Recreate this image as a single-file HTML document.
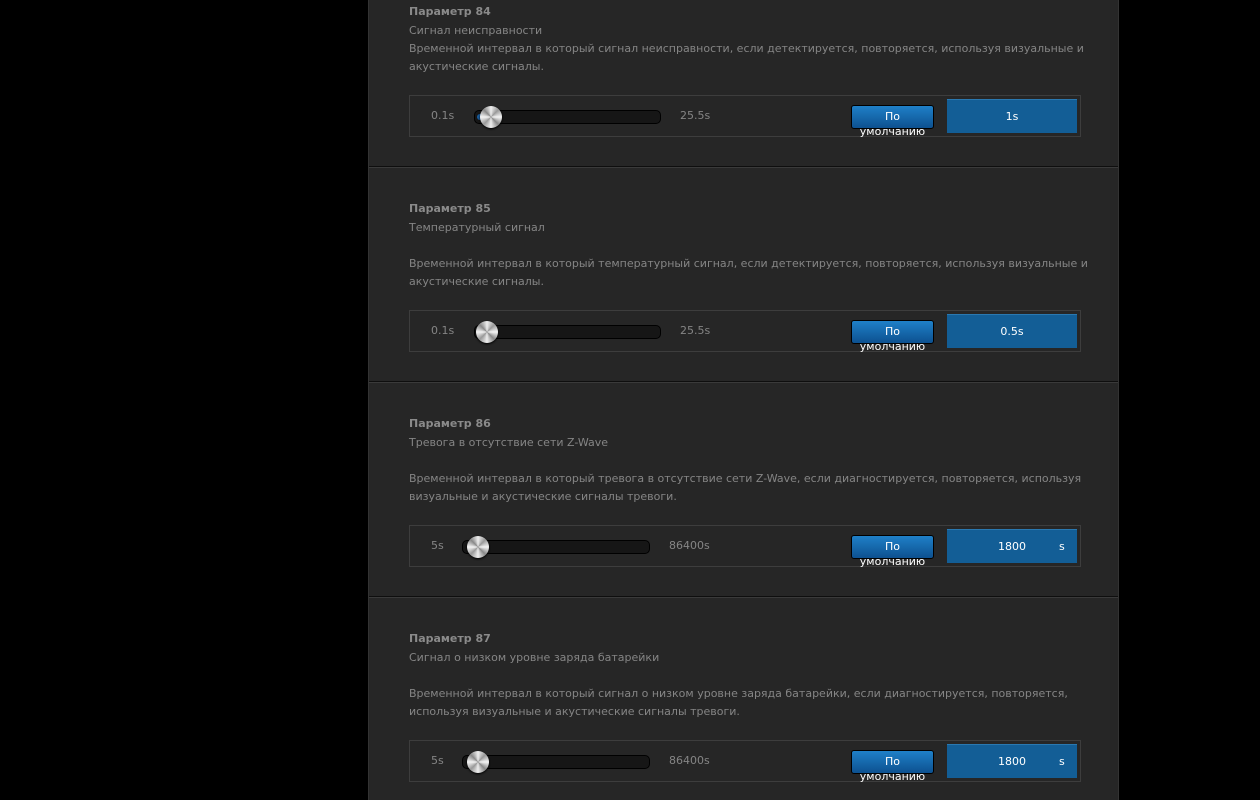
<!DOCTYPE html>
<html><head><meta charset="utf-8"><style>
*{margin:0;padding:0;box-sizing:border-box}
body{width:1260px;height:800px;background:#000;position:relative;overflow:hidden;font-family:"DejaVu Sans","Liberation Sans",sans-serif;font-size:11px;color:#858585}
.panel{position:absolute;left:368px;top:0;width:751px;height:800px;background:#262626;border-left:1px solid #333;border-right:1px solid #333}
.sep{position:absolute;left:0;width:100%;height:2px;border-top:1px solid #0e0e0e;border-bottom:1px solid #3a3a3a}
.t{position:absolute;left:40px;white-space:nowrap;line-height:18px}
.b{font-weight:bold;color:#8a8a8a}
.box{position:absolute;left:40px;width:672px;height:42px;border:1px solid #3d3d3d;background:#262626}
.lab{position:absolute;top:13px;color:#858585}
.track{position:absolute;top:14px;height:14px;border:1px solid #000;border-radius:5px;background:#161616}
.knob{position:absolute;top:10px;width:22px;height:22px;border-radius:50%;background:conic-gradient(#eee,#999,#f4f4f4,#888,#eee,#999,#f4f4f4,#888,#eee);box-shadow:0 1px 2px #000}
.dot{position:absolute;top:18px;width:6px;height:6px;border-radius:3px;background:#1a5ea0}
.btn{position:absolute;left:441px;top:9px;width:83px;height:24px;border:1px solid #000;border-radius:3px;background:linear-gradient(#1f80c8,#0d5190);color:#fff;text-align:center;line-height:15px;padding-top:3px;font-size:11px}
.val{position:absolute;left:537px;top:3px;width:130px;height:34px;background:#135e96;color:#fff;text-align:center;line-height:34px;border-top:1px solid #2a78b0}
</style></head><body>
<div class="panel">
<div class="t b" style="top:3px">Параметр 84</div>
<div class="t" style="top:22px">Сигнал неисправности</div>
<div class="t" style="top:40px">Временной интервал в который сигнал неисправности, если детектируется, повторяется, используя визуальные и</div>
<div class="t" style="top:58px">акустические сигналы.</div>
<div class="box" style="top:95px"><span class="lab" style="left:21px">0.1s</span><div class="track" style="left:64px;width:187px"></div><div class="dot" style="left:67px"></div><div class="knob" style="left:70px"></div><span class="lab" style="left:270px">25.5s</span><div class="btn">По<br>умолчанию</div><div class="val">1s</div></div>
<div class="sep" style="top:166px"></div>

<div class="t b" style="top:200px">Параметр 85</div>
<div class="t" style="top:219px">Температурный сигнал</div>
<div class="t" style="top:255px">Временной интервал в который температурный сигнал, если детектируется, повторяется, используя визуальные и</div>
<div class="t" style="top:273px">акустические сигналы.</div>
<div class="box" style="top:310px"><span class="lab" style="left:21px">0.1s</span><div class="track" style="left:64px;width:187px"></div><div class="knob" style="left:66px"></div><span class="lab" style="left:270px">25.5s</span><div class="btn">По<br>умолчанию</div><div class="val">0.5s</div></div>
<div class="sep" style="top:381px"></div>

<div class="t b" style="top:415px">Параметр 86</div>
<div class="t" style="top:434px">Тревога в отсутствие сети Z-Wave</div>
<div class="t" style="top:470px">Временной интервал в который тревога в отсутствие сети Z-Wave, если диагностируется, повторяется, используя</div>
<div class="t" style="top:488px">визуальные и акустические сигналы тревоги.</div>
<div class="box" style="top:525px"><span class="lab" style="left:21px">5s</span><div class="track" style="left:52px;width:188px"></div><div class="knob" style="left:57px"></div><span class="lab" style="left:259px">86400s</span><div class="btn">По<br>умолчанию</div><div class="val">1800<span style="position:absolute;left:112px">s</span></div></div>
<div class="sep" style="top:596px"></div>

<div class="t b" style="top:630px">Параметр 87</div>
<div class="t" style="top:649px">Сигнал о низком уровне заряда батарейки</div>
<div class="t" style="top:685px">Временной интервал в который сигнал о низком уровне заряда батарейки, если диагностируется, повторяется,</div>
<div class="t" style="top:703px">используя визуальные и акустические сигналы тревоги.</div>
<div class="box" style="top:740px"><span class="lab" style="left:21px">5s</span><div class="track" style="left:52px;width:188px"></div><div class="knob" style="left:57px"></div><span class="lab" style="left:259px">86400s</span><div class="btn">По<br>умолчанию</div><div class="val">1800<span style="position:absolute;left:112px">s</span></div></div>
</div>
</body></html>
